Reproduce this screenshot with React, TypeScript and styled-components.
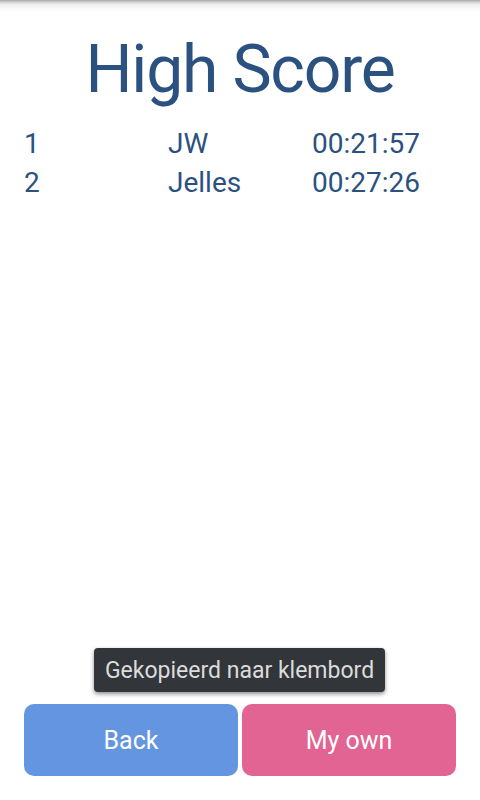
import React from "react";
import styled, { createGlobalStyle } from "styled-components";

const Global = createGlobalStyle`
  html, body { margin: 0; padding: 0; background: #ffffff; }
  body { font-family: Roboto, "Noto Sans", sans-serif; }
  * { box-sizing: border-box; }
`;

const Page = styled.div`
  position: relative;
  width: 480px;
  height: 800px;
  display: flex;
  flex-direction: column;
  background: #ffffff;
  overflow: hidden;
`;

const TopShadow = styled.div`
  height: 12px;
  flex: none;
  background: linear-gradient(to bottom, #a8a8a8 0px, #cfcfcf 2px, #ececec 4px, #f8f8f8 8px, #ffffff 12px);
`;

const Title = styled.h1`
  margin: 25px 0 0;
  font-family: Roboto, sans-serif;
  font-weight: 400;
  font-size: 66px;
  line-height: 66px;
  letter-spacing: -1.2px;
  text-align: center;
  color: #2b5180;
`;

const Table = styled.div`
  margin-top: 21px;
  padding: 0 24px;
  display: flex;
  flex-direction: column;
`;

const Row = styled.div`
  display: grid;
  grid-template-columns: repeat(3, 1fr);
  font-size: 28px;
  line-height: 39px;
  color: #2b5180;
`;

const Cell = styled.div``;

const Spacer = styled.div`
  flex: 1;
`;

const Buttons = styled.div`
  display: flex;
  gap: 4px;
  padding: 0 24px 24px;
`;

const Button = styled.button<{ $bg: string }>`
  flex: 1;
  height: 72px;
  border: none;
  border-radius: 10px;
  background: ${(p) => p.$bg};
  color: #ffffff;
  font-family: Roboto, sans-serif;
  font-size: 25px;
  padding: 0;
`;

const Toast = styled.div`
  position: absolute;
  left: 94px;
  top: 648px;
  width: 291px;
  height: 44px;
  display: flex;
  align-items: center;
  justify-content: center;
  background: #32363a;
  color: #dcdcdc;
  font-size: 23px;
  border-radius: 4px;
  box-shadow: 0 2px 4px rgba(0, 0, 0, 0.45);
`;

const scores = [
  { rank: 1, name: "JW", time: "00:21:57" },
  { rank: 2, name: "Jelles", time: "00:27:26" },
];

export default function App() {
  return (
    <Page>
      <Global />
      <TopShadow />
      <Title>High Score</Title>
      <Table>
        {scores.map((s) => (
          <Row key={s.rank}>
            <Cell>{s.rank}</Cell>
            <Cell>{s.name}</Cell>
            <Cell>{s.time}</Cell>
          </Row>
        ))}
      </Table>
      <Spacer />
      <Buttons>
        <Button $bg="#6495e1">Back</Button>
        <Button $bg="#e26492">My own</Button>
      </Buttons>
      <Toast>Gekopieerd naar klembord</Toast>
    </Page>
  );
}
